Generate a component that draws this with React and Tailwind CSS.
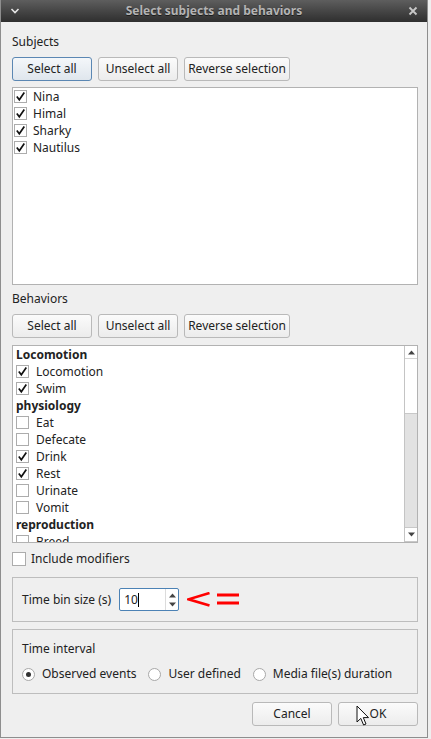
import React from 'react';

const subjects = ['Nina', 'Himal', 'Sharky', 'Nautilus'];

const behaviors = [
  { cat: 'Locomotion' },
  { label: 'Locomotion', checked: true },
  { label: 'Swim', checked: true },
  { cat: 'physiology' },
  { label: 'Eat' },
  { label: 'Defecate' },
  { label: 'Drink', checked: true },
  { label: 'Rest', checked: true },
  { label: 'Urinate' },
  { label: 'Vomit' },
  { cat: 'reproduction' },
  { label: 'Breed' }
];

const CheckBox = ({ checked }) => (
  <span className="w-[13px] h-[13px] shrink-0 border border-[#acacac] bg-white flex items-center justify-center">
    {checked && (
      <svg width="11" height="11" viewBox="0 0 11 11">
        <path d="M1.8 5.6 L4.3 8.8 L9.3 1.6" fill="none" stroke="#111" strokeWidth="1.7" />
      </svg>
    )}
  </span>
);

const Radio = ({ on }) => (
  <span className="w-[13px] h-[13px] shrink-0 rounded-full border border-[#a8a8a8] bg-white flex items-center justify-center">
    {on && <span className="w-[5px] h-[5px] rounded-full bg-[#333]" />}
  </span>
);

const Btn = ({ children, w, primary }) => (
  <button
    className={`${w} h-6 shrink-0 rounded-[3px] border text-[12px] text-[#222] ${
      primary
        ? 'border-[#5b87b3] bg-gradient-to-b from-[#f4f7fa] to-[#dfe6ed]'
        : 'border-[#b9b9b9] bg-gradient-to-b from-[#fbfbfb] to-[#ececec]'
    }`}
  >
    {children}
  </button>
);

const ButtonRow = ({ focused }) => (
  <div className="flex gap-[6px]">
    <Btn w="w-[80px]" primary={focused}>Select all</Btn>
    <Btn w="w-[80px]">Unselect all</Btn>
    <Btn w="w-[106px]">Reverse selection</Btn>
  </div>
);

const Arrow = ({ down }) => (
  <svg width="9" height="5" viewBox="0 0 9 5">
    <path d={down ? 'M1 0.5 L8 0.5 L4.5 4.5 Z' : 'M1 4.5 L8 4.5 L4.5 0.5 Z'} fill="#444" />
  </svg>
);

export default function App() {
  return (
    <div className="w-[431px] h-[739px] bg-[#efefef] overflow-hidden font-['Noto_Sans','Open_Sans',sans-serif] text-[12px] text-[#222]">
      <div className="w-[428px] h-[738px] border-x border-b border-[#8e8e8e] flex flex-col">

        {/* title bar */}
        <div className="h-[22px] shrink-0 bg-gradient-to-b from-[#5e5e5e] to-[#2f2f2f] flex items-center justify-between px-[9px]">
          <svg width="10" height="6" viewBox="0 0 10 6">
            <path d="M1.5 1 L5 4.5 L8.5 1" fill="none" stroke="#e6e6e6" strokeWidth="1.6" />
          </svg>
          <span className="font-bold text-[12px] text-[#b4b4b4] [text-shadow:0_1px_0_#1c1c1c]">
            Select subjects and behaviors
          </span>
          <svg width="10" height="10" viewBox="0 0 10 10">
            <path d="M1.5 1.5 L8.5 8.5 M8.5 1.5 L1.5 8.5" stroke="#c8c8c8" strokeWidth="1.8" />
          </svg>
        </div>

        <div className="flex flex-col pl-[11px] pr-[9px]">
          {/* subjects */}
          <div className="mt-[11px] h-[17px] leading-[17px]">Subjects</div>
          <div className="mt-[7px]"><ButtonRow focused /></div>
          <div className="mt-[6px] h-[198px] border border-[#b2b2b2] bg-white">
            {subjects.map((s) => (
              <div key={s} className="h-[17px] flex items-center gap-[6px] pl-px">
                <CheckBox checked />
                <span>{s}</span>
              </div>
            ))}
          </div>

          {/* behaviors */}
          <div className="mt-[5px] h-[17px] leading-[17px]">Behaviors</div>
          <div className="mt-[7px]"><ButtonRow /></div>
          <div className="mt-[7px] h-[198px] border border-[#b2b2b2] bg-white flex overflow-hidden">
            <div className="flex-1 overflow-hidden pl-[3px]">
              {behaviors.map((b, i) =>
                b.cat ? (
                  <div key={i} className="h-[17px] leading-[17px] font-bold">{b.cat}</div>
                ) : (
                  <div key={i} className="h-[17px] flex items-center gap-[7px]">
                    <CheckBox checked={b.checked} />
                    <span>{b.label}</span>
                  </div>
                )
              )}
            </div>
            <div className="w-[14px] -mr-px shrink-0 flex flex-col border-l border-[#c4c4c4]">
              <div className="h-[13px] bg-white border-b border-[#d4d4d4] flex items-center justify-center">
                <Arrow />
              </div>
              <div className="h-[55px] bg-white border-b border-[#c8c8c8]" />
              <div className="h-[113px] bg-[#e2e2e2]" />
              <div className="h-[15px] bg-white border-y border-[#c8c8c8] flex items-center justify-center">
                <Arrow down />
              </div>
            </div>
          </div>

          {/* include modifiers */}
          <div className="mt-[9px] h-[14px] flex items-center gap-[5px]">
            <span className="w-[14px] h-[14px] border border-[#acacac] bg-white" />
            <span>Include modifiers</span>
          </div>

          {/* time bin */}
          <div className="mt-[11px] h-[45px] border border-[#bdbdbd] flex items-center pl-[9px]">
            <span>Time bin size (s)</span>
            <div className="ml-[8px] w-[60px] h-[23px] rounded-[2px] border border-[#4c82b5] bg-white flex">
              <div className="flex-1 flex items-center pl-[4px]">
                <span>10</span>
                <span className="w-px h-[14px] bg-black" />
              </div>
              <div className="w-[13px] border-l border-[#dcdcdc] flex flex-col items-center justify-center gap-[4px]">
                <Arrow />
                <Arrow down />
              </div>
            </div>
            <svg className="ml-[8px]" width="54" height="16" viewBox="0 0 54 16">
              <path d="M22.5 1 L1.5 7.3 L22.5 13.5" fill="none" stroke="#f00" strokeWidth="2.6" />
              <rect x="30" y="1.5" width="22" height="3" fill="#f00" />
              <rect x="30" y="9.5" width="22" height="3" fill="#f00" />
            </svg>
          </div>

          {/* time interval */}
          <div className="mt-[7px] h-[65px] border border-[#bdbdbd] pl-[9px] flex flex-col">
            <div className="mt-[10px] h-[17px] leading-[17px]">Time interval</div>
            <div className="mt-[8px] flex items-center">
              <Radio on />
              <span className="ml-[7px]">Observed events</span>
              <span className="ml-[12px]"><Radio /></span>
              <span className="ml-[7px]">User defined</span>
              <span className="ml-[12px]"><Radio /></span>
              <span className="ml-[7px]">Media file(s) duration</span>
            </div>
          </div>

          {/* dialog buttons */}
          <div className="mt-[8px] flex justify-end gap-[6px]">
            <Btn w="w-[80px]">Cancel</Btn>
            <div className="relative">
              <Btn w="w-[80px]">OK</Btn>
              <svg className="absolute left-[18px] top-[3px]" width="14" height="22" viewBox="0 0 14 22">
                <path d="M1 1 L1 17 L4.8 13.4 L7.6 20 L10 19 L7.3 12.6 L12.5 12.6 Z" fill="#fff" stroke="#111" strokeWidth="1" />
              </svg>
            </div>
          </div>
        </div>
      </div>
    </div>
  );
}
